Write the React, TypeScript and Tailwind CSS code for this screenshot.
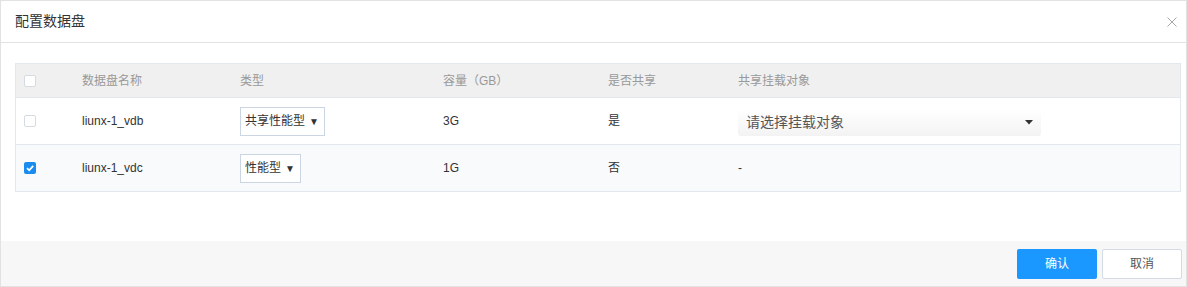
import React from "react";

const font = { fontFamily: '"Liberation Sans", "Noto Sans CJK SC", sans-serif' };

function Check({ checked }: { checked?: boolean }) {
  if (checked) {
    return (
      <span className="w-[12px] h-[12px] rounded-[2px] bg-[#1a8cf0] flex items-center justify-center">
        <svg width="10" height="10" viewBox="0 0 10 10">
          <path d="M2 5.2 L4.2 7.3 L8.2 2.8" fill="none" stroke="#fff" strokeWidth="1.8" />
        </svg>
      </span>
    );
  }
  return <span className="w-[12px] h-[12px] rounded-[2px] border border-[#d5dbe3] bg-white block" />;
}

function TypeSelect({ label }: { label: string }) {
  return (
    <div className="h-[29px] border border-[#cbd6e2] bg-white inline-flex items-center pl-[4px] pr-[5px] gap-[4px] text-[12px] text-[#333]">
      <span>{label}</span>
      <span className="text-[10px] text-[#333]">▼</span>
    </div>
  );
}

export default function App() {
  const cols = "grid grid-cols-[66px_158px_203px_165px_130px_1fr] items-center";
  return (
    <div style={font} className="w-[1187px] h-[287px] border border-[#e2e2e2] bg-white flex flex-col">
      <div className="h-[42px] border-b border-[#e2e2e2] flex items-center justify-between pl-[14px] pr-[9px] shrink-0">
        <span className="text-[14px] text-[#333]">配置数据盘</span>
        <svg width="10" height="10" viewBox="0 0 10 10">
          <path d="M0.5 0.5 L9.5 9.5 M9.5 0.5 L0.5 9.5" stroke="#a8a8a8" strokeWidth="1" />
        </svg>
      </div>
      <div className="flex-1 pt-[20px] pl-[14px]">
        <div className="w-[1166px] border border-[#e3e8ee]">
          <div className={`${cols} h-[34px] bg-[#f0f0f0] border-b border-[#e3e8ee] text-[12px] text-[#999]`}>
            <div className="pl-[8px]"><Check /></div>
            <div>数据盘名称</div>
            <div>类型</div>
            <div>容量（GB）</div>
            <div>是否共享</div>
            <div>共享挂载对象</div>
          </div>
          <div className={`${cols} h-[47px] bg-white border-b border-[#e3e8ee] text-[12px] text-[#333]`}>
            <div className="pl-[8px]"><Check /></div>
            <div>liunx-1_vdb</div>
            <div><TypeSelect label="共享性能型" /></div>
            <div>3G</div>
            <div>是</div>
            <div>
              <div className="w-[303px] h-[27px] mt-[3px] rounded-[3px] bg-gradient-to-b from-[#ffffff] to-[#f3f3f3] flex items-center justify-between pl-[8px] pr-[8px]">
                <span className="text-[14px] text-[#555]">请选择挂载对象</span>
                <svg width="8" height="5" viewBox="0 0 8 5"><path d="M0 0 H8 L4 4.5 Z" fill="#333" /></svg>
              </div>
            </div>
          </div>
          <div className={`${cols} h-[46px] bg-[#f9fafc] text-[12px] text-[#333]`}>
            <div className="pl-[8px]"><Check checked /></div>
            <div>liunx-1_vdc</div>
            <div><TypeSelect label="性能型" /></div>
            <div>1G</div>
            <div>否</div>
            <div>-</div>
          </div>
        </div>
      </div>
      <div className="h-[45px] bg-[#f7f7f7] flex items-center justify-end gap-[5px] pr-[3px] shrink-0">
        <button className="w-[80px] h-[30px] rounded-[2px] bg-[#1a98ff] text-white text-[12px]">确认</button>
        <button className="w-[80px] h-[30px] mr-[1px] rounded-[2px] bg-white border border-[#d3dbe4] text-[#555] text-[12px]">取消</button>
      </div>
    </div>
  );
}
